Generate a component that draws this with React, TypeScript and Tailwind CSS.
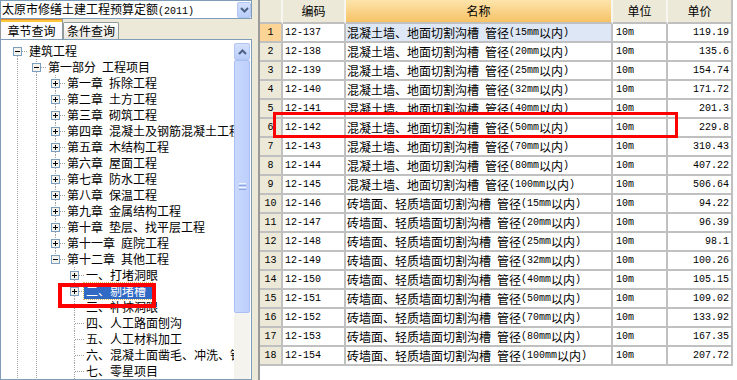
import React from 'react';

const ASCII_RUN = /^[\x20-\x7e]+$/;

// half-width runs in a 6px-per-char mono, CJK in Noto
function Mixed({ text }: { text: string }) {
  const parts = text.split(/([\x20-\x7e]+)/).filter((p) => p.length > 0);
  return (
    <>
      {parts.map((p, i) =>
        ASCII_RUN.test(p) ? (
          <span key={i} className="whitespace-pre font-['Liberation_Mono',monospace] text-[10px]">
            {p}
          </span>
        ) : (
          <span key={i}>{p}</span>
        ),
      )}
    </>
  );
}

type TreeRow = {
  label: string;
  depth: number;
  box?: 'plus' | 'minus';
  rails: number[];
  up: boolean;
  down: boolean;
  selected?: boolean;
};

const chapters = [
  '第一章 拆除工程',
  '第二章 土方工程',
  '第三章 砌筑工程',
  '第四章 混凝土及钢筋混凝土工程',
  '第五章 木结构工程',
  '第六章 屋面工程',
  '第七章 防水工程',
  '第八章 保温工程',
  '第九章 金属结构工程',
  '第十章 垫层、找平层工程',
  '第十一章 庭院工程',
];

const treeRows: TreeRow[] = [
  { label: '建筑工程', depth: 0, box: 'minus', rails: [], up: false, down: true },
  { label: '第一部分 工程项目', depth: 1, box: 'minus', rails: [0], up: true, down: true },
  ...chapters.map((c) => ({ label: c, depth: 2, box: 'plus' as const, rails: [0, 1], up: true, down: true })),
  { label: '第十二章 其他工程', depth: 2, box: 'minus', rails: [0, 1], up: true, down: false },
  { label: '一、打堵洞眼', depth: 3, box: 'plus', rails: [0, 1], up: true, down: true },
  { label: '二、剔堵槽', depth: 3, box: 'plus', rails: [0, 1], up: true, down: true, selected: true },
  { label: '三、补抹洞眼', depth: 3, rails: [0, 1], up: true, down: true },
  { label: '四、人工路面刨沟', depth: 3, rails: [0, 1], up: true, down: true },
  { label: '五、人工材料加工', depth: 3, rails: [0, 1], up: true, down: true },
  { label: '六、混凝土面凿毛、冲洗、钻孔', depth: 3, rails: [0, 1], up: true, down: true },
  { label: '七、零星项目', depth: 3, rails: [0, 1], up: true, down: true },
];

const DOT = '#a3a3a3';

function Connector({ rail, own, row }: { rail: boolean; own: boolean; row: TreeRow }) {
  return (
    <svg width="19" height="16" className="shrink-0 block">
      {rail && <line x1="9.5" y1="0" x2="9.5" y2="16" stroke={DOT} strokeDasharray="1 1" />}
      {own && row.up && <line x1="9.5" y1="0" x2="9.5" y2="8" stroke={DOT} strokeDasharray="1 1" />}
      {own && row.down && <line x1="9.5" y1="9" x2="9.5" y2="16" stroke={DOT} strokeDasharray="1 1" />}
      {own && <line x1="10" y1="8.5" x2="19" y2="8.5" stroke={DOT} strokeDasharray="1 1" />}
      {own && row.box && (
        <g>
          <rect x="5.5" y="4.5" width="8" height="8" fill="#f3f2ec" stroke="#7b9ebd" />
          <line x1="7" y1="8.5" x2="12" y2="8.5" stroke="#000" />
          {row.box === 'plus' && <line x1="9.5" y1="6" x2="9.5" y2="11" stroke="#000" />}
        </g>
      )}
    </svg>
  );
}

function Chevron({ dir }: { dir: 'up' | 'down' }) {
  return (
    <svg width="9" height="6" viewBox="0 0 9 6">
      <path
        d={dir === 'down' ? 'M1 1 L4.5 4.5 L8 1' : 'M1 5 L4.5 1.5 L8 5'}
        fill="none"
        stroke="#4d6185"
        strokeWidth="2"
      />
    </svg>
  );
}

const sizes = [15, 20, 25, 32, 40, 50, 70, 80, 100];
const prices1 = ['119.19', '135.6', '154.74', '171.72', '201.3', '229.8', '310.43', '407.22', '506.64'];
const prices2 = ['94.22', '96.39', '98.1', '100.26', '105.15', '109.02', '133.92', '167.35', '207.72'];

const tableRows = [
  ...sizes.map((s, i) => ({
    code: `12-${137 + i}`,
    name: `混凝土墙、地面切割沟槽 管径(${s}mm以内)`,
    price: prices1[i],
  })),
  ...sizes.map((s, i) => ({
    code: `12-${146 + i}`,
    name: `砖墙面、轻质墙面切割沟槽 管径(${s}mm以内)`,
    price: prices2[i],
  })),
];

const cell = 'h-full flex items-center border-r-2 border-b-2 border-[#c0c0c0] shrink-0 overflow-hidden whitespace-nowrap';

export default function App() {
  return (
    <div className="relative flex h-[380px] w-[737px] overflow-hidden bg-[#ece9d8] font-['Noto_Sans_CJK_SC',sans-serif] text-[12px] leading-none text-black">
      {/* left: quota selector + tree */}
      <div className="flex w-[252px] shrink-0 flex-col">
        <div className="flex h-[21px] items-center border border-[#7f9db9] bg-white pl-[1px]">
          <span className="flex-1 whitespace-nowrap">
            <Mixed text="太原市修缮土建工程预算定额(2011)" />
          </span>
          <div className="flex h-[16px] w-[14px] items-center justify-center rounded-[2px] border border-[#b3c6f2] bg-gradient-to-b from-[#d4e0fd] to-[#b9cdf9]">
            <Chevron dir="down" />
          </div>
        </div>

        <div className="flex h-[22px] items-end">
          <div className="flex h-[20px] w-[63px] flex-col border-x border-[#919b9c] bg-[#fcfcfe]">
            <div className="h-[1px] bg-[#e68b2c]" />
            <div className="h-[2px] bg-[#ffc83c]" />
            <div className="flex flex-1 items-center justify-center">章节查询</div>
          </div>
          <div className="flex h-[17px] w-[56px] items-center justify-center rounded-t-[2px] border border-b-0 border-[#919b9c] bg-gradient-to-b from-white to-[#e8e7e0]">
            条件查询
          </div>
        </div>

        <div className="flex h-[350px] border border-[#7f9db9] bg-white">
          <div className="flex-1 overflow-hidden pl-[7px] pt-[3px]">
            {treeRows.map((row) => (
              <div key={row.label} className="flex h-[16px] items-center">
                {Array.from({ length: row.depth + 1 }).map((_, c) => (
                  <Connector key={c} rail={row.rails.includes(c)} own={c === row.depth} row={row} />
                ))}
                <span
                  className={
                    row.selected
                      ? 'flex h-[16px] items-center whitespace-nowrap bg-[#316ac5] pl-[2px] pr-[6px] text-white outline-1 outline-dotted outline-[#d9b45a]'
                      : 'flex h-[16px] items-center whitespace-nowrap pl-[2px]'
                  }
                >
                  <Mixed text={row.label} />
                </span>
              </div>
            ))}
          </div>
          <div className="mr-[1px] mt-[3px] flex w-[16px] flex-col bg-[#f4f3ee]">
            <div className="flex h-[17px] items-center justify-center rounded-[2px] border border-[#b3c6f2] bg-gradient-to-b from-[#d4e0fd] to-[#b9cdf9]">
              <Chevron dir="up" />
            </div>
            <div className="flex h-[253px] flex-col items-center justify-center gap-[1px] rounded-[2px] border border-[#a9bff4] bg-gradient-to-r from-[#c9d8fd] to-[#bccefa]">
              <div className="h-[1px] w-[7px] bg-[#eef3ff]" />
              <div className="h-[1px] w-[7px] bg-[#8ca5e0]" />
              <div className="h-[1px] w-[7px] bg-[#eef3ff]" />
              <div className="h-[1px] w-[7px] bg-[#8ca5e0]" />
            </div>
          </div>
        </div>
      </div>

      <div className="w-[6px] shrink-0" />

      {/* right: quota grid */}
      <div className="flex flex-1 flex-col border-l-2 border-[#9b9b9b] bg-white">
        <div className="flex h-[24px] shrink-0 bg-white">
          <div className="h-full w-[23px] border-r-2 border-b-2 border-r-[#f7f6f1] border-b-[#c0c0c0] bg-[#ece9d8]" />
          <div className="flex h-full w-[63px] items-center justify-center border-r-2 border-b-2 border-r-[#f7f6f1] border-b-[#c0c0c0] bg-[#ece9d8]">
            编码
          </div>
          <div className="flex h-full w-[267px] items-center justify-center border-r-2 border-b-2 border-r-[#f7f6f1] border-b-[#c0c0c0] bg-gradient-to-b from-[#fde4ab] to-[#f6c264]">
            名称
          </div>
          <div className="flex h-full w-[55px] items-center justify-center border-r-2 border-b-2 border-r-[#f7f6f1] border-b-[#c0c0c0] bg-[#ece9d8]">
            单位
          </div>
          <div className="flex h-full w-[65px] items-center justify-center border-r-2 border-b-2 border-r-[#c0c0c0] border-b-[#c0c0c0] bg-[#ece9d8]">
            单价
          </div>
        </div>

        {tableRows.map((r, i) => (
          <div key={r.code} className="flex h-[19px] shrink-0">
            <div className={`${cell} w-[23px] justify-center ${i === 0 ? 'bg-[#fcd496]' : 'bg-[#ece9d8]'}`}>
              <Mixed text={String(i + 1)} />
            </div>
            <div className={`${cell} w-[63px] pl-[2px]`}>
              <Mixed text={r.code} />
            </div>
            <div className={`${cell} w-[267px] pl-[1px] ${i === 0 ? 'bg-[#dde7f5]' : ''}`}>
              <Mixed text={r.name} />
            </div>
            <div className={`${cell} w-[55px] pl-[3px]`}>
              <Mixed text="10m" />
            </div>
            <div className={`${cell} w-[65px] justify-end pr-[2px]`}>
              <Mixed text={r.price} />
            </div>
          </div>
        ))}
      </div>

      {/* red annotation boxes */}
      <div className="absolute left-[58px] top-[283px] h-[25px] w-[98px] border-4 border-[#ff0000]" />
      <div className="absolute left-[273px] top-[112px] h-[26px] w-[405px] border-[3px] border-[#ff0000]" />
    </div>
  );
}
